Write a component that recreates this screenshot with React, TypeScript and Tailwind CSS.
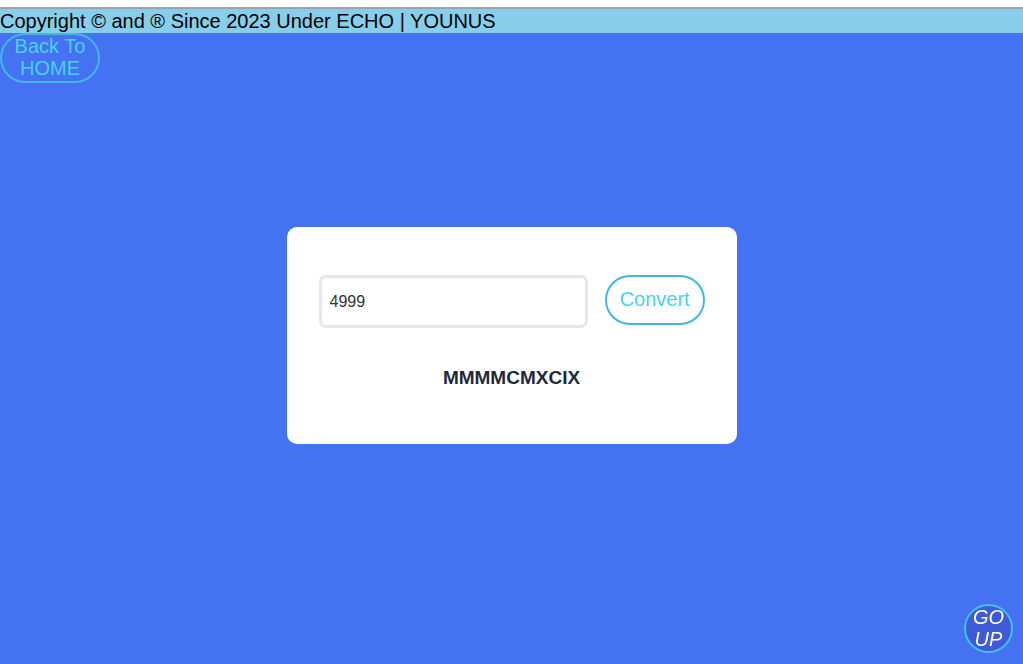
import React, { useState } from "react";

const toRoman = (n: number) => {
  const map: [number, string][] = [
    [1000, "M"], [900, "CM"], [500, "D"], [400, "CD"], [100, "C"], [90, "XC"],
    [50, "L"], [40, "XL"], [10, "X"], [9, "IX"], [5, "V"], [4, "IV"], [1, "I"],
  ];
  let out = "";
  for (const [v, s] of map) {
    while (n >= v) {
      out += s;
      n -= v;
    }
  }
  return out;
};

const App = () => {
  const [value, setValue] = useState("4999");
  const [result, setResult] = useState(toRoman(4999));

  return (
    <div className="min-h-screen flex flex-col bg-[#4472f2] font-['Liberation_Sans',Arial,sans-serif]">
      {/* top strip */}
      <div className="h-[9px] bg-white border-b-2 border-[#9aa3a8]"></div>
      <div className="h-[24px] bg-[#87ceeb] text-black text-[20px] leading-[24px]">
        Copyright © and ® Since 2023 Under ECHO | YOUNUS
      </div>

      {/* body */}
      <div className="flex-1 flex flex-col">
        <div>
          <button className="w-[100px] h-[50px] rounded-[25px] border-2 border-[#3fb8e6] text-[#45d4f0] text-[20px] leading-[22px] pb-[2px]">
            Back To
            <br />
            HOME
          </button>
        </div>

        <div className="flex justify-center mt-[144px]">
          <div className="w-[450px] h-[217px] bg-white rounded-[10px] pt-[48px] px-[32px]">
            <div className="flex items-center gap-[17px]">
              <input
                value={value}
                onChange={(e) => setValue(e.target.value)}
                className="w-[270px] h-[53px] border-[3px] border-[#e5e7eb] rounded-[7px] px-[8px] text-[16px] text-[#333] outline-none font-['Liberation_Sans',Arial,sans-serif]"
              />
              <button
                onClick={() => setResult(toRoman(parseInt(value) || 0))}
                className="w-[100px] h-[50px] rounded-full border-2 border-[#40b8dc] text-[#45d4e8] text-[20px] -mt-[3px] pb-[2px]"
              >
                Convert
              </button>
            </div>
            <p className="mt-[38px] text-center text-[19px] leading-[24px] font-bold text-[#1f2937]">
              {result}
            </p>
          </div>
        </div>
      </div>

      {/* go up */}
      <button className="fixed right-[10px] bottom-[11px] w-[49px] h-[49px] rounded-full border-2 border-[#3ec3ec] bg-[#3f5ad6] text-white italic text-[20px] leading-[22px] pb-[3px]">
        GO
        <br />
        UP
      </button>
    </div>
  );
};

export default App;
